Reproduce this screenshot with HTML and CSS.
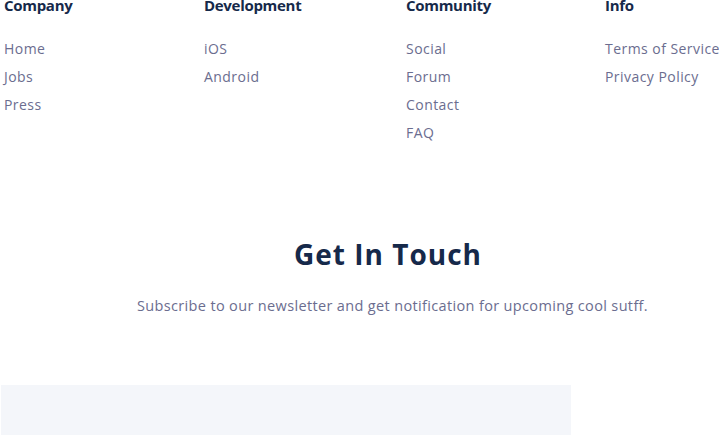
FILE: index.html
```html
<!DOCTYPE html>
<html>
<head>
<meta charset="utf-8">
<link rel="stylesheet" href="styles.css">
</head>
<body>
<div class="page">
  <div class="links">
    <div class="col">
      <h4 class="col-title">Company</h4>
      <ul class="col-list">
        <li>Home</li>
        <li>Jobs</li>
        <li>Press</li>
      </ul>
    </div>
    <div class="col">
      <h4 class="col-title">Development</h4>
      <ul class="col-list">
        <li>iOS</li>
        <li>Android</li>
      </ul>
    </div>
    <div class="col">
      <h4 class="col-title">Community</h4>
      <ul class="col-list">
        <li>Social</li>
        <li>Forum</li>
        <li>Contact</li>
        <li>FAQ</li>
      </ul>
    </div>
    <div class="col">
      <h4 class="col-title">Info</h4>
      <ul class="col-list">
        <li>Terms of Service</li>
        <li>Privacy Policy</li>
      </ul>
    </div>
  </div>
  <section class="touch">
    <h2 class="touch-title">Get In Touch</h2>
    <p class="touch-text">Subscribe to our newsletter and get notification for upcoming cool sutff.</p>
  </section>
  <div class="form">
    <div class="field"></div>
  </div>
</div>
</body>
</html>
```
FILE: styles.css
```css
html, body {
  margin: 0;
  padding: 0;
  overflow: hidden;
  background: #ffffff;
}
body {
  font-family: "Open Sans", "Liberation Sans", sans-serif;
}
.page {
  width: 776px;
  margin-top: -4px;
}
.links {
  display: grid;
  grid-template-columns: 200px 202px 199px 200px;
  padding-left: 4px;
}
.col-title {
  margin: 0;
  font-size: 15px;
  font-weight: 700;
  line-height: 18px;
  letter-spacing: -0.3px;
  color: #16294a;
}
.col-list {
  list-style: none;
  margin: 26px 0 0;
  padding: 0;
}
.col-list li {
  font-size: 14px;
  line-height: 18px;
  letter-spacing: 0.45px;
  color: #6b6d8f;
  margin-bottom: 10px;
}
.touch {
  text-align: center;
  margin-top: 84px;
}
.touch-title {
  margin: 0;
  font-size: 28px;
  font-weight: 700;
  line-height: 36px;
  letter-spacing: 1px;
  color: #16294a;
}
.touch-text {
  margin: 24px 0 0;
  padding-left: 9px;
  font-size: 14.5px;
  line-height: 20px;
  letter-spacing: 0.35px;
  color: #6b6d8f;
}
.form {
  margin-top: 69px;
}
.field {
  width: 570px;
  height: 50px;
  margin-left: 1px;
  background: #f4f6fa;
}
```
